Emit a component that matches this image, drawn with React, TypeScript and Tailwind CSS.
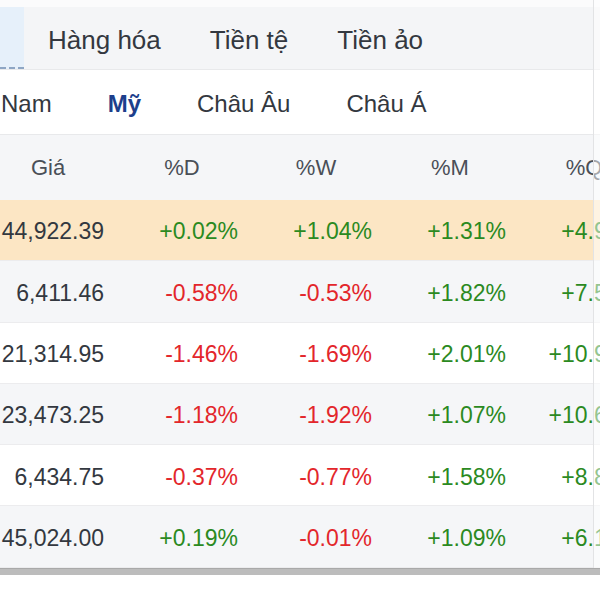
const rows = [
  { price: "44,922.39", d: "+0.02%", w: "+1.04%", m: "+1.31%", q: "+4.92%", hl: true },
  { price: "6,411.46", d: "-0.58%", w: "-0.53%", m: "+1.82%", q: "+7.54%" },
  { price: "21,314.95", d: "-1.46%", w: "-1.69%", m: "+2.01%", q: "+10.93%" },
  { price: "23,473.25", d: "-1.18%", w: "-1.92%", m: "+1.07%", q: "+10.61%" },
  { price: "6,434.75", d: "-0.37%", w: "-0.77%", m: "+1.58%", q: "+8.83%" },
  { price: "45,024.00", d: "+0.19%", w: "-0.01%", m: "+1.09%", q: "+6.15%" },
];

function Pct({ v }: { v: string }) {
  const up = v.startsWith("+");
  return (
    <div
      className={`w-[134px] shrink-0 text-right pr-[11px] ${
        up ? "text-[#2b8a1f]" : "text-[#e3262b]"
      }`}
    >
      {v}
    </div>
  );
}

export default function App() {
  return (
    <div className="relative w-[600px] h-[600px] bg-white overflow-hidden font-['Liberation_Sans',Arial,sans-serif]">
      <div className="w-[600px]">
        <div className="h-[7px] bg-[#fbfbfc]" />

        {/* category tabs */}
        <div className="h-[63px] bg-[#f4f5f7] flex items-center text-[26px] text-[#333840] border-b border-[#e8e9eb]">
          <div className="w-[24px] h-full bg-[#e6f0fa] border-b-2 border-dashed border-[#8ea6c4] shrink-0" />
          <div className="flex gap-[49px] ml-[24px] pt-[5px]">
            <span>Hàng hóa</span>
            <span>Tiền tệ</span>
            <span>Tiền ảo</span>
          </div>
        </div>

        {/* region tabs */}
        <div className="h-[65px] bg-white flex items-center gap-[56px] text-[24px] text-[#333840] border-b border-[#e8e9eb] pt-[3px]">
          <span className="ml-[1px]">Nam</span>
          <span className="font-bold text-[#1d3f8c]">Mỹ</span>
          <span>Châu Âu</span>
          <span>Châu Á</span>
        </div>

        {/* table */}
        <div className="overflow-hidden">
          <div className="-ml-[19px]">
            <div className="h-[65px] bg-[#f5f6f8] flex items-center text-[22px] text-[#4a4f57]">
              {["Giá", "%D", "%W", "%M", "%Q"].map((h) => (
                <div key={h} className="w-[134px] shrink-0 text-center">
                  {h}
                </div>
              ))}
            </div>
            {rows.map((r, i) => (
              <div
                key={r.price}
                className={`h-[61.3px] flex items-center text-[23px] border-b border-[#ececee] pt-[3px] ${
                  r.hl ? "bg-[#fce6c4]" : i % 2 === 1 ? "bg-[#f5f6f8]" : "bg-white"
                }`}
              >
                <div className="w-[134px] shrink-0 text-right pr-[11px] text-[#333840]">{r.price}</div>
                <Pct v={r.d} />
                <Pct v={r.w} />
                <Pct v={r.m} />
                <Pct v={r.q} />
              </div>
            ))}
          </div>
        </div>
        <div className="h-[7px] bg-[#bcbcbc] border-t border-[#a9a9a9]" />
      </div>

      {/* scroll edge overlay */}
      <div className="absolute top-0 right-0 w-[7px] h-[568px] bg-white/50 border-l border-[#e2e3e5]" />
    </div>
  );
}
